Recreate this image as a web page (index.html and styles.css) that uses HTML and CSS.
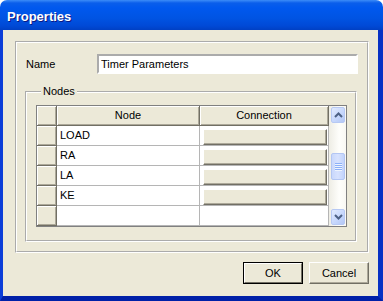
FILE: index.html
```html
<!DOCTYPE html>
<html>
<head>
<meta charset="utf-8">
<link rel="stylesheet" href="styles.css">
</head>
<body>
<div class="window">
  <div class="titlebar"><span class="title">Properties</span></div>
  <div class="client">
    <div class="panel">
      <div class="name-row">
        <span class="lbl">Name</span>
        <div class="input">Timer Parameters</div>
      </div>
      <fieldset class="group">
        <legend class="legend">Nodes</legend>
        <div class="grid">
          <div class="table">
            <div class="hcell corner"></div>
            <div class="hcell">Node</div>
            <div class="hcell">Connection</div>

            <div class="rhead"></div>
            <div class="cell">LOAD</div>
            <div class="cell conn"><div class="cbtn"></div></div>

            <div class="rhead"></div>
            <div class="cell">RA</div>
            <div class="cell conn"><div class="cbtn"></div></div>

            <div class="rhead"></div>
            <div class="cell">LA</div>
            <div class="cell conn"><div class="cbtn"></div></div>

            <div class="rhead"></div>
            <div class="cell">KE</div>
            <div class="cell conn"><div class="cbtn"></div></div>

            <div class="rhead"></div>
            <div class="cell"></div>
            <div class="cell conn"></div>
          </div>
          <div class="scrollbar">
            <div class="sbtn">
              <svg width="9" height="6" viewBox="0 0 9 6"><path d="M1 5 L4.5 1.5 L8 5" fill="none" stroke="#4D6185" stroke-width="2"/></svg>
            </div>
            <div class="track">
              <div class="thumb">
                <span class="grip"></span><span class="grip"></span><span class="grip"></span><span class="grip"></span>
              </div>
            </div>
            <div class="sbtn">
              <svg width="9" height="6" viewBox="0 0 9 6"><path d="M1 1 L4.5 4.5 L8 1" fill="none" stroke="#4D6185" stroke-width="2"/></svg>
            </div>
          </div>
        </div>
      </fieldset>
    </div>
    <div class="buttons">
      <div class="btn default"><span class="btn-in">OK</span></div>
      <div class="btn"><span class="btn-in">Cancel</span></div>
    </div>
  </div>
</div>
</body>
</html>
```

FILE: styles.css
```css
* { box-sizing: border-box; }
html, body { margin: 0; padding: 0; background: #ffffff; }
body {
  font-family: "Liberation Sans", Arial, sans-serif;
  font-size: 11px;
  color: #000;
}
.window {
  width: 383px;
  height: 301px;
  display: flex;
  flex-direction: column;
}
.titlebar {
  height: 30px;
  flex: none;
  border-radius: 7px 7px 0 0;
  background: linear-gradient(180deg, #3C8CF8 0px, #0A5EEB 3px, #0058EE 8px, #0054E3 18px, #0049D6 26px, #0040C4 30px);
  display: flex;
  align-items: center;
  padding: 2px 0 0 7px;
}
.title {
  color: #fff;
  font-family: "Liberation Sans", Arial, sans-serif;
  font-weight: bold;
  font-size: 13px;
  text-shadow: 1px 1px 0 #0A1883;
}
.client {
  flex: 1;
  background: #ECE9D8;
  border-left: 3px solid #0B3ED8;
  border-right: 5px solid #0831C4;
  border-bottom: 5px solid #0020A8;
  padding: 11px 0 0 12px;
  display: flex;
  flex-direction: column;
}
.panel {
  width: 354px;
  height: 212px;
  border: 2px groove #ffffff;
  display: flex;
  flex-direction: column;
}
.name-row {
  display: flex;
  align-items: center;
  padding: 11px 0 0 9px;
}
.lbl {
  width: 71px;
}
.input {
  width: 261px;
  height: 20px;
  border: 2px inset #ffffff;
  background: #fff;
  padding: 1px 0 0 2px;
  line-height: 14px;
}
.group {
  margin: 11px 0 0 8px;
  width: 332px;
  height: 157px;
  border: 2px groove #ffffff;
  padding: 7px 8px 0 9px;
}
.legend {
  padding: 0 2px;
  margin-left: 5px;
  line-height: 13px;
}
.grid {
  width: 311px;
  height: 122px;
  border: 1px solid #808080;
  display: flex;
  background: #fff;
}
.table {
  display: grid;
  grid-template-columns: 20px 143px 129px;
  grid-template-rows: 20px repeat(5, 20px);
  width: 292px;
}
.hcell, .rhead {
  background: #ECE9D8;
  border-right: 1px solid #716F64;
  border-bottom: 1px solid #716F64;
  box-shadow: inset 1px 1px 0 #fff, inset -1px -1px 0 #ACA899;
}
.hcell {
  text-align: center;
  line-height: 19px;
}
.cell {
  border-right: 1px solid #B5B5B5;
  border-bottom: 1px solid #B5B5B5;
  padding-left: 3px;
  line-height: 19px;
}
.conn {
  padding: 3px 1px 0 3px;
}
.cbtn {
  height: 16px;
  background: #ECE9D8;
  border-top: 1px solid #fff;
  border-left: 1px solid #fff;
  border-right: 1px solid #716F64;
  border-bottom: 1px solid #716F64;
  box-shadow: inset -1px -1px 0 #ACA899;
}
.scrollbar {
  width: 17px;
  display: flex;
  flex-direction: column;
  background: linear-gradient(90deg, #EEEDE5, #FEFEFB 60%, #F9F8F3);
  padding: 1px 1px 1px 2px;
}
.sbtn {
  height: 16px;
  border: 1px solid #B7C9F4;
  border-radius: 2px;
  background: linear-gradient(135deg, #E2EBFE, #C5D6FC 60%, #B4C7F4);
  display: flex;
  align-items: center;
  justify-content: center;
  flex: none;
}
.track {
  flex: 1;
  display: flex;
  flex-direction: column;
  padding-top: 30px;
}
.thumb {
  height: 27px;
  border: 1px solid #B3C6F3;
  border-radius: 2px;
  background: linear-gradient(90deg, #C9D8FC, #D7E2FE 50%, #C2D3FC);
  display: flex;
  flex-direction: column;
  align-items: center;
  justify-content: center;
  gap: 1px;
}
.grip {
  width: 7px;
  height: 1px;
  background: #8CB0F8;
  box-shadow: 0 1px 0 #EEF4FE;
}
.buttons {
  display: flex;
  gap: 6px;
  justify-content: flex-end;
  padding-right: 9px;
  margin-top: 9px;
}
.btn {
  width: 60px;
  height: 22px;
  background: #ECE9D8;
  border-top: 1px solid #fff;
  border-left: 1px solid #fff;
  border-right: 1px solid #716F64;
  border-bottom: 1px solid #716F64;
  box-shadow: inset -1px -1px 0 #ACA899;
  display: flex;
}
.btn.default {
  border: 1px solid #000;
  box-shadow: none;
}
.btn-in {
  flex: 1;
  display: flex;
  align-items: center;
  justify-content: center;
}
.btn.default .btn-in {
  border-top: 1px solid #fff;
  border-left: 1px solid #fff;
  border-right: 1px solid #716F64;
  border-bottom: 1px solid #716F64;
}
```
